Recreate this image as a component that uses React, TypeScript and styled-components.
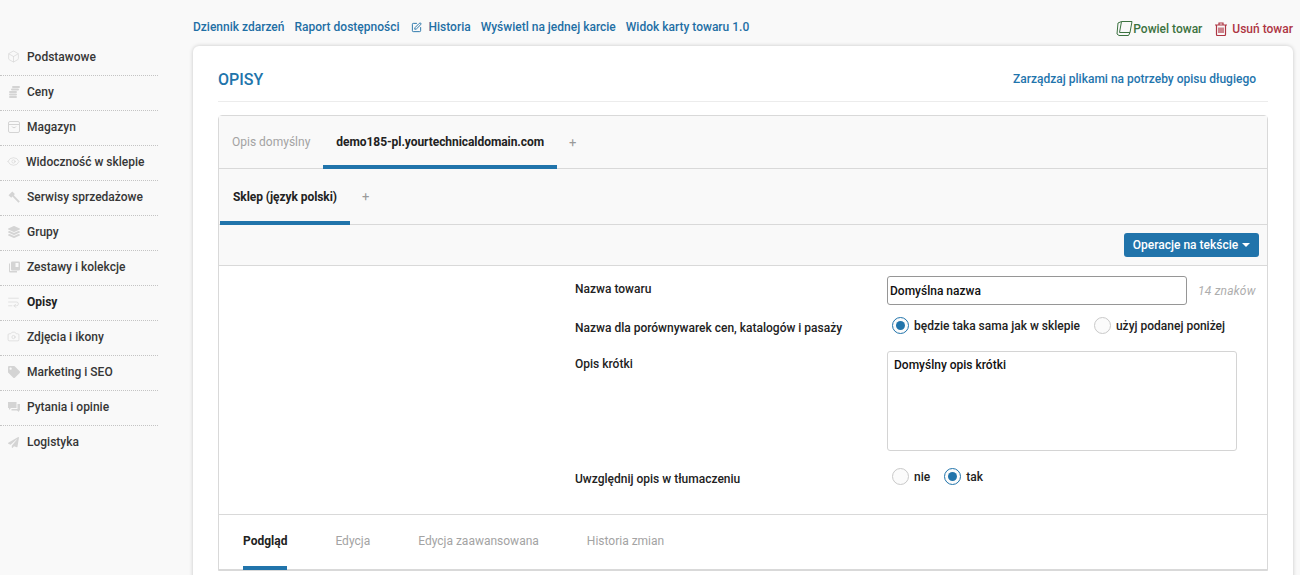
import React from "react";
import styled, { createGlobalStyle } from "styled-components";
import { Box, Eye, Camera, WrapText, SquarePen } from "lucide-react";
import { FaLayerGroup, FaTag, FaPaperPlane } from "react-icons/fa";

const GlobalStyle = createGlobalStyle`
  html, body {
    margin: 0;
    height: 575px;
    overflow: hidden;
    background: #f9f9f9;
    font-family: Roboto, "Liberation Sans", sans-serif;
    font-size: 12px;
    font-weight: 500;
    color: #2b2b2b;
  }
`;

const Page = styled.div`
  display: flex;
  height: 575px;
  overflow: hidden;
`;

const Sidebar = styled.ul`
  list-style: none;
  width: 158px;
  margin: 41px 35px 0 0;
  padding: 0;
  flex-shrink: 0;
`;

const SideItem = styled.li<{ active?: boolean }>`
  display: flex;
  align-items: center;
  height: 35px;
  box-sizing: border-box;
  padding-bottom: 3px;
  border-bottom: 1px dotted #c4c4c4;
  font-weight: ${(props) => (props.active ? 700 : 500)};
  color: ${(props) => (props.active ? "#222" : "#363636")};

  &:last-child {
    border-bottom: none;
  }
`;

const SideIcon = styled.span<{ tight?: boolean }>`
  display: flex;
  align-items: center;
  justify-content: center;
  width: 13px;
  margin: 0 ${(props) => (props.tight ? 6 : 7)}px 0 7px;
  color: #d4d4d4;
`;

const Main = styled.div`
  flex: 1;
  min-width: 0;
  margin-right: 7px;
`;

const TopBar = styled.div`
  display: flex;
  align-items: center;
  justify-content: space-between;
  height: 46px;
  padding-top: 8px;
  box-sizing: border-box;
`;

const TopLinks = styled.div`
  display: flex;
  align-items: center;
  gap: 10px;
`;

const TopLink = styled.a`
  display: flex;
  align-items: center;
  gap: 6px;
  color: #1f6fa5;
  white-space: nowrap;

  svg {
    margin-left: 2px;
  }
`;

const TopActions = styled.div`
  display: flex;
  align-items: center;
  gap: 13px;
  padding-top: 3px;
`;

const Action = styled.a<{ danger?: boolean }>`
  display: flex;
  align-items: center;
  gap: ${(props) => (props.danger ? 5 : 0)}px;
  color: ${(props) => (props.danger ? "#ae3543" : "#3c7240")};
`;

const Card = styled.div`
  background: #fff;
  border-radius: 6px 6px 0 0;
  box-shadow: 0 0 4px rgba(0, 0, 0, 0.2);
  padding: 0 25px;
  height: 560px;
`;

const CardHead = styled.div`
  display: flex;
  align-items: center;
  justify-content: space-between;
  height: 56px;
  padding: 10px 12px 0 0;
  box-sizing: border-box;
  border-bottom: 1px solid #ececec;
`;

const Title = styled.h2`
  margin: 2px 0 0;
  font-size: 16px;
  font-weight: 500;
  color: #2174ab;
`;

const HeadLink = styled.a`
  color: #1f75ad;
`;

const Panel = styled.div`
  margin-top: 13px;
  border: 1px solid #d9d9d9;
  border-radius: 4px 4px 0 0;
`;

const TabRow = styled.div<{ height: number; inset: number }>`
  display: flex;
  align-items: stretch;
  height: ${(props) => props.height}px;
  padding-left: ${(props) => props.inset}px;
  box-sizing: border-box;
  background: #f9f9f9;
  border-bottom: 1px solid #d9d9d9;
`;

const Tab = styled.div<{ active?: boolean; px: number }>`
  display: flex;
  align-items: center;
  padding: 3px ${(props) => props.px}px 0;
  box-sizing: border-box;
  margin-bottom: -1px;
  white-space: nowrap;
  border-bottom: 4px solid
    ${(props) => (props.active ? "#2174ab" : "transparent")};
  color: ${(props) => (props.active ? "#222" : "#a3a3a3")};
  font-weight: ${(props) => (props.active ? 700 : 400)};
  letter-spacing: ${(props) => (props.active ? "-0.06px" : "0")};
`;

const Plus = styled(Tab)`
  color: #9a9a9a;
  font-size: 13px;
`;

const Toolbar = styled.div`
  display: flex;
  align-items: center;
  justify-content: flex-end;
  height: 41px;
  box-sizing: border-box;
  padding-right: 8px;
  background: #f9f9f9;
  border-bottom: 1px solid #d9d9d9;
`;

const BlueButton = styled.button`
  display: flex;
  align-items: center;
  gap: 4px;
  height: 24px;
  width: 135px;
  justify-content: center;
  padding: 0;
  border: none;
  border-radius: 3px;
  background: #2174ab;
  color: #fff;
  font: inherit;
`;

const Caret = styled.span`
  width: 0;
  height: 0;
  border-left: 4px solid transparent;
  border-right: 4px solid transparent;
  border-top: 4px solid #fff;
`;

const Form = styled.div`
  display: grid;
  grid-template-columns: 312px 1fr;
  grid-template-rows: 29px 46px 100px 64px;
  padding: 10px 0 0 356px;
  height: 249px;
  box-sizing: border-box;
  border-bottom: 1px solid #d9d9d9;
  color: #222;
`;

const Label = styled.label<{ top: number }>`
  padding-top: ${(props) => props.top}px;
`;

const Field = styled.div`
  display: flex;
  align-items: center;
`;

const RadioField = styled(Field)<{ top: number }>`
  align-items: flex-start;
  padding: ${(props) => props.top}px 0 0 5px;
  gap: 14px;
`;

const TextInput = styled.div`
  display: flex;
  align-items: center;
  width: 300px;
  height: 29px;
  padding-left: 2px;
  box-sizing: border-box;
  border: 1px solid #969696;
  border-radius: 3px;
  color: #111;
`;

const Hint = styled.i`
  margin-left: 11px;
  color: #adadad;
  font-weight: 400;
  letter-spacing: 0.2px;
`;

const TextArea = styled.div`
  width: 350px;
  height: 100px;
  padding: 6px 6px;
  box-sizing: border-box;
  border: 1px solid #d4d4d4;
  border-radius: 3px;
  color: #111;
`;

const RadioOption = styled.span`
  display: flex;
  align-items: center;
  gap: 5px;
`;

const RadioDot = styled.span<{ on?: boolean }>`
  display: flex;
  align-items: center;
  justify-content: center;
  width: 17px;
  height: 17px;
  box-sizing: border-box;
  border-radius: 50%;
  border: 1px solid ${(props) => (props.on ? "#2174ab" : "#c9c9c9")};
  background: #fbfbfb;

  &::after {
    content: "";
    width: 9px;
    height: 9px;
    border-radius: 50%;
    background: ${(props) => (props.on ? "#2174ab" : "transparent")};
  }
`;

const BottomTabs = styled.div`
  display: flex;
  height: 55px;
  padding-left: 24px;
  gap: 48px;
  box-sizing: border-box;
  border-bottom: 1px solid #d9d9d9;
`;

const BottomTab = styled(Tab)`
  padding: 0;
  letter-spacing: 0;
`;

const CoinsIcon = () => (
  <svg width="12" height="12" viewBox="0 0 12 12" fill="currentColor">
    <rect x="1" y="5" width="8" height="2" rx="1" />
    <rect x="1" y="7.6" width="8" height="2" rx="1" />
    <rect x="1" y="10" width="8" height="2" rx="1" />
    <rect x="3" y="2.4" width="8" height="2" rx="1" />
    <rect x="4" y="0" width="8" height="2" rx="1" />
  </svg>
);

const BagIcon = () => (
  <svg width="12" height="12" viewBox="0 0 12 12" fill="none" stroke="currentColor">
    <rect x="0.5" y="0.5" width="11" height="11" rx="1.5" />
    <path d="M0.5 3.5h11M4 5.5c.5 1.600 3.500 1.600 4 0" />
  </svg>
);

const HammerIcon = () => (
  <svg width="12" height="12" viewBox="0 0 12 12" fill="currentColor">
    <path d="M0.500 4.200 4.300 0.500l2.600 2.600-1.100 1.100 6 6.300-1.300 1.200-6.100-6.100-1.200 1.100z" />
  </svg>
);

const BookIcon = () => (
  <svg width="12" height="12" viewBox="0 0 12 12" fill="currentColor">
    <path d="M1 2.500h1V10h7v1.500H2.200A1.200 1.200 0 0 1 1 10.300z" />
    <path d="M3 1.700A1.200 1.200 0 0 1 4.200.5h6.600A1.200 1.200 0 0 1 12 1.700v6.600a1.200 1.200 0 0 1-1.200 1.200H4.200A1.200 1.200 0 0 1 3 8.300zM7.500 2v4h3V2z" fillRule="evenodd" />
  </svg>
);

const ChatIcon = () => (
  <svg width="12" height="12" viewBox="0 0 12 12" fill="currentColor">
    <path d="M0 1h8.500v6H3L1 9V7H0z" />
    <path d="M9.500 3H12v6.500h-1V11L9 9.500H3.500V8h6z" />
  </svg>
);

const CopyIcon = () => (
  <svg width="17" height="17" viewBox="0 0 17 17" fill="none" stroke="#3c7240" strokeWidth="1">
    <path d="M5.500 1.500 H16 L14 12.500 H3.500 Z" />
    <path d="M5.500 1.500 2 3 1 14 3 15.500 H12.500 L14 12.500" />
  </svg>
);

const TrashIcon = () => (
  <svg width="12" height="14" viewBox="0 0 12 14" fill="none" stroke="#ae3543" strokeWidth="1.200">
    <path d="M0 3h12M4 3V1h4v2M1.500 3v9.500a1 1 0 0 0 1 1h7a1 1 0 0 0 1-1V3M4 5.500v5.500M6 5.500v5.500M8 5.500v5.500" />
  </svg>
);

const items = [
  { name: "Podstawowe", icon: <Box size={13} strokeWidth={1.2} /> },
  { name: "Ceny", icon: <CoinsIcon /> },
  { name: "Magazyn", icon: <BagIcon /> },
  { name: "Widoczność w sklepie", icon: <Eye size={13} strokeWidth={1.2} />, tight: true },
  { name: "Serwisy sprzedażowe", icon: <HammerIcon /> },
  { name: "Grupy", icon: <FaLayerGroup size={12} /> },
  { name: "Zestawy i kolekcje", icon: <BookIcon /> },
  { name: "Opisy", icon: <WrapText size={14} strokeWidth={1.2} />, active: true },
  { name: "Zdjęcia i ikony", icon: <Camera size={13} strokeWidth={1.2} /> },
  { name: "Marketing i SEO", icon: <FaTag size={12} /> },
  { name: "Pytania i opinie", icon: <ChatIcon /> },
  { name: "Logistyka", icon: <FaPaperPlane size={11} /> },
];

export default function App() {
  return (
    <Page>
      <GlobalStyle />
      <Sidebar>
        {items.map((item) => (
          <SideItem key={item.name} active={item.active}>
            <SideIcon tight={item.tight}>{item.icon}</SideIcon>
            {item.name}
          </SideItem>
        ))}
      </Sidebar>
      <Main>
        <TopBar>
          <TopLinks>
            <TopLink>Dziennik zdarzeń</TopLink>
            <TopLink>Raport dostępności</TopLink>
            <TopLink>
              <SquarePen size={11} />
              Historia
            </TopLink>
            <TopLink>Wyświetl na jednej karcie</TopLink>
            <TopLink>Widok karty towaru 1.0</TopLink>
          </TopLinks>
          <TopActions>
            <Action>
              <CopyIcon />
              Powiel towar
            </Action>
            <Action danger>
              <TrashIcon />
              Usuń towar
            </Action>
          </TopActions>
        </TopBar>
        <Card>
          <CardHead>
            <Title>OPISY</Title>
            <HeadLink>Zarządzaj plikami na potrzeby opisu długiego</HeadLink>
          </CardHead>
          <Panel>
            <TabRow height={53} inset={0}>
              <Tab px={13}>Opis domyślny</Tab>
              <Tab px={13} active>
                demo185-pl.yourtechnicaldomain.com
              </Tab>
              <Plus px={12}>+</Plus>
            </TabRow>
            <TabRow height={56} inset={1}>
              <Tab px={13} active>
                Sklep (język polski)
              </Tab>
              <Plus px={12}>+</Plus>
            </TabRow>
            <Toolbar>
              <BlueButton>
                Operacje na tekście
                <Caret />
              </BlueButton>
            </Toolbar>
            <Form>
              <Label top={6}>Nazwa towaru</Label>
              <Field>
                <TextInput>Domyślna nazwa</TextInput>
                <Hint>14 znaków</Hint>
              </Field>
              <Label top={16}>Nazwa dla porównywarek cen, katalogów i pasaży</Label>
              <RadioField top={12}>
                <RadioOption>
                  <RadioDot on />
                  będzie taka sama jak w sklepie
                </RadioOption>
                <RadioOption>
                  <RadioDot />
                  użyj podanej poniżej
                </RadioOption>
              </RadioField>
              <Label top={6}>Opis krótki</Label>
              <TextArea>Domyślny opis krótki</TextArea>
              <Label top={21}>Uwzględnij opis w tłumaczeniu</Label>
              <RadioField top={17}>
                <RadioOption>
                  <RadioDot />
                  nie
                </RadioOption>
                <RadioOption>
                  <RadioDot on />
                  tak
                </RadioOption>
              </RadioField>
            </Form>
            <BottomTabs>
              <BottomTab px={0} active>
                Podgląd
              </BottomTab>
              <BottomTab px={0}>Edycja</BottomTab>
              <BottomTab px={0}>Edycja zaawansowana</BottomTab>
              <BottomTab px={0}>Historia zmian</BottomTab>
            </BottomTabs>
          </Panel>
        </Card>
      </Main>
    </Page>
  );
}
